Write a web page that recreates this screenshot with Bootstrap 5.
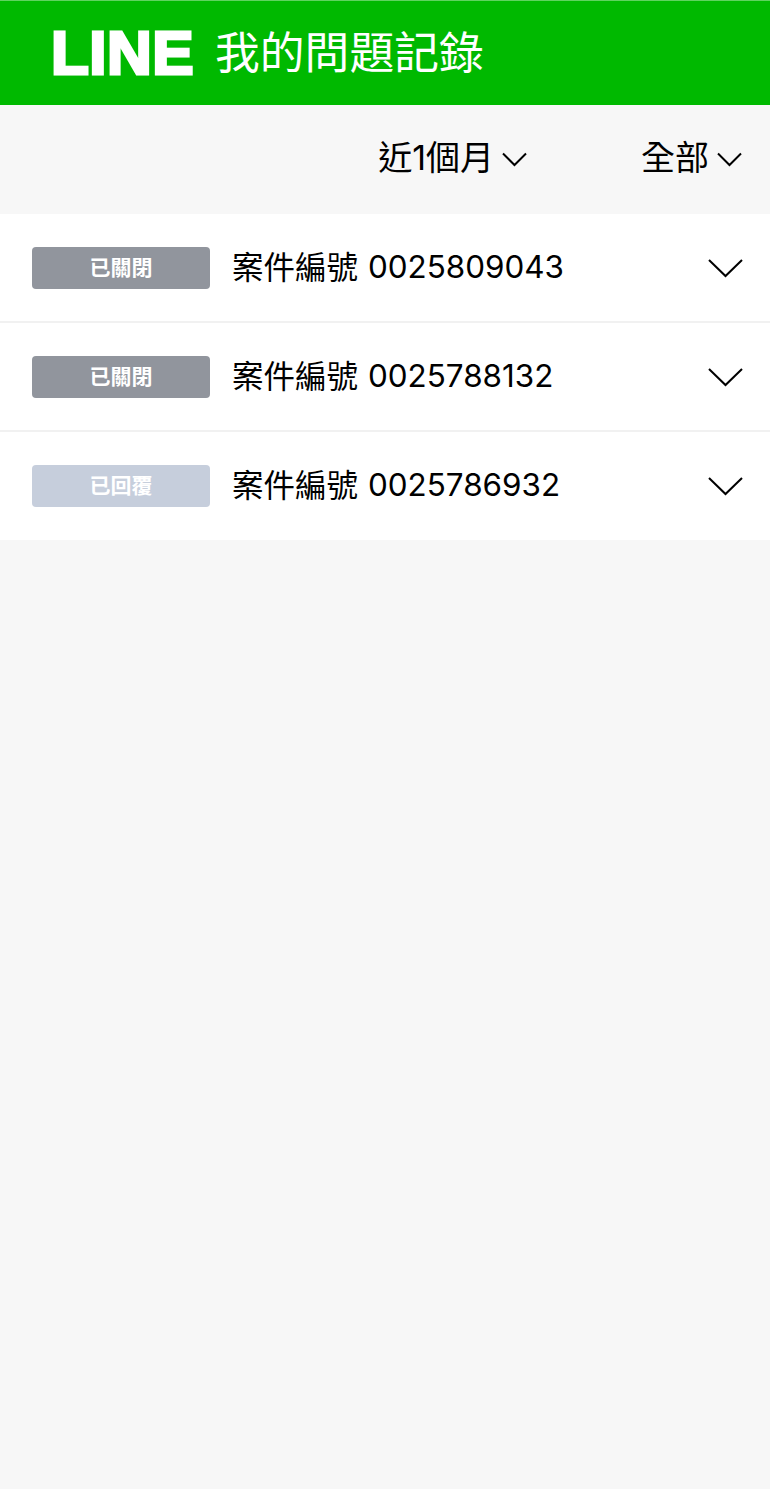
<!DOCTYPE html>
<html lang="zh-Hant">
<head>
    <meta charset="UTF-8">
    <meta name="viewport" content="width=device-width, initial-scale=1.0">
    <title>我的問題記錄</title>
    <link rel="stylesheet" href="https://cdn.jsdelivr.net/npm/bootstrap@5.3.0/dist/css/bootstrap.min.css">
    <script src="https://cdn.jsdelivr.net/npm/bootstrap@5.3.0/dist/js/bootstrap.bundle.min.js"></script>
    <style>
        body {
            background: #f7f7f7;
            color: #000;
            font-family: Inter, "Noto Sans CJK TC", sans-serif;
        }
        .top-bar {
            height: 105px;
            padding-left: 51px;
            background: #00b900;
            border-top: 1px solid #5fd35f;
            color: #fff;
        }
        .line-logo {
            width: 142px;
            font: 700 62px/1 "Liberation Sans", sans-serif;
            letter-spacing: .5px;
            -webkit-text-stroke: 3px #fff;
            white-space: nowrap;
        }
        .top-title {
            margin-left: 22px;
            font-size: 44.8px;
            line-height: 1;
        }
        .filter-bar {
            height: 109px;
            padding-right: 28px;
            font-size: 34px;
            line-height: 1;
        }
        .filter-item + .filter-item { margin-left: 114px; }
        .filter-item span { padding-bottom: 3px; }
        .filter-item svg { margin-left: 8px; }
        .case-row {
            height: 107px;
            padding: 0 27px 0 32px;
            background: #fff;
        }
        .case-row + .case-row { margin-top: 2px; }
        .case-row:last-child {
            height: 108px;
            padding-bottom: 1px;
        }
        .status-tag {
            width: 178px;
            height: 42px;
            border-radius: 4px;
            color: #fff;
            font-size: 21px;
            font-weight: 700;
        }
        .tag-closed { background: #91959d; }
        .tag-replied { background: #c6cedc; }
        .case-label {
            margin-left: 22px;
            font-size: 31.5px;
            line-height: 1;
        }
        .case-no {
            margin-left: 10px;
            font-size: 31.4px;
            line-height: 1;
        }
        .row-list { background: #f1f1f1; }
    </style>
</head>
<body>
    <header class="top-bar d-flex align-items-center">
        <div class="line-logo">LINE</div>
        <div class="top-title">我的問題記錄</div>
    </header>

    <div class="filter-bar d-flex align-items-center justify-content-end">
        <div class="filter-item d-flex align-items-center">
            <span>近1個月</span>
            <svg width="25" height="15" viewBox="0 0 25 15"><path d="M1 1.5 12.5 13 24 1.5" fill="none" stroke="#000" stroke-width="2"/></svg>
        </div>
        <div class="filter-item d-flex align-items-center">
            <span>全部</span>
            <svg width="25" height="15" viewBox="0 0 25 15"><path d="M1 1.5 12.5 13 24 1.5" fill="none" stroke="#000" stroke-width="2"/></svg>
        </div>
    </div>

    <div class="row-list">
        <div class="case-row d-flex align-items-center">
            <span class="status-tag tag-closed d-flex align-items-center justify-content-center">已關閉</span>
            <span class="case-label">案件編號</span>
            <span class="case-no">0025809043</span>
            <svg class="ms-auto" width="35" height="20" viewBox="0 0 35 20"><path d="M1 2 17.5 18 34 2" fill="none" stroke="#000" stroke-width="2"/></svg>
        </div>
        <div class="case-row d-flex align-items-center">
            <span class="status-tag tag-closed d-flex align-items-center justify-content-center">已關閉</span>
            <span class="case-label">案件編號</span>
            <span class="case-no">0025788132</span>
            <svg class="ms-auto" width="35" height="20" viewBox="0 0 35 20"><path d="M1 2 17.5 18 34 2" fill="none" stroke="#000" stroke-width="2"/></svg>
        </div>
        <div class="case-row d-flex align-items-center">
            <span class="status-tag tag-replied d-flex align-items-center justify-content-center">已回覆</span>
            <span class="case-label">案件編號</span>
            <span class="case-no">0025786932</span>
            <svg class="ms-auto" width="35" height="20" viewBox="0 0 35 20"><path d="M1 2 17.5 18 34 2" fill="none" stroke="#000" stroke-width="2"/></svg>
        </div>
    </div>
</body>
</html>
